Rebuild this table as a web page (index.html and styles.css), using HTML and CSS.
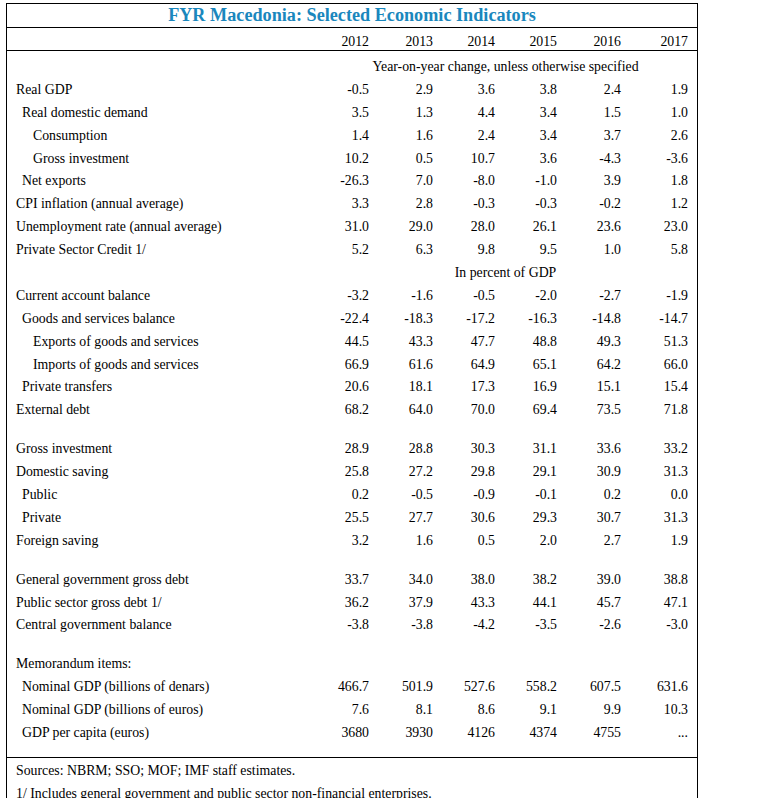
FILE: index.html
```html
<!DOCTYPE html>
<html lang="en">
<head>
<meta charset="utf-8">
<title>FYR Macedonia: Selected Economic Indicators</title>
<link rel="stylesheet" href="styles.css">
</head>
<body>
<div class="sheet">
  <div class="title">FYR Macedonia: Selected Economic Indicators</div>
  <div class="row years"><span></span><span>2012</span><span>2013</span><span>2014</span><span>2015</span><span>2016</span><span>2017</span></div>
  <div class="body">
    <div class="row sub"><span></span><span class="span">Year-on-year change, unless otherwise specified</span></div>
    <div class="row"><span class="l0">Real GDP</span><span>-0.5</span><span>2.9</span><span>3.6</span><span>3.8</span><span>2.4</span><span>1.9</span></div>
    <div class="row"><span class="l1">Real domestic demand</span><span>3.5</span><span>1.3</span><span>4.4</span><span>3.4</span><span>1.5</span><span>1.0</span></div>
    <div class="row"><span class="l2">Consumption</span><span>1.4</span><span>1.6</span><span>2.4</span><span>3.4</span><span>3.7</span><span>2.6</span></div>
    <div class="row"><span class="l2">Gross investment</span><span>10.2</span><span>0.5</span><span>10.7</span><span>3.6</span><span>-4.3</span><span>-3.6</span></div>
    <div class="row"><span class="l1">Net exports</span><span>-26.3</span><span>7.0</span><span>-8.0</span><span>-1.0</span><span>3.9</span><span>1.8</span></div>
    <div class="row"><span class="l0">CPI inflation (annual average)</span><span>3.3</span><span>2.8</span><span>-0.3</span><span>-0.3</span><span>-0.2</span><span>1.2</span></div>
    <div class="row"><span class="l0">Unemployment rate (annual average)</span><span>31.0</span><span>29.0</span><span>28.0</span><span>26.1</span><span>23.6</span><span>23.0</span></div>
    <div class="row"><span class="l0">Private Sector Credit 1/</span><span>5.2</span><span>6.3</span><span>9.8</span><span>9.5</span><span>1.0</span><span>5.8</span></div>
    <div class="row sub"><span></span><span class="span">In percent of GDP</span></div>
    <div class="row"><span class="l0">Current account balance</span><span>-3.2</span><span>-1.6</span><span>-0.5</span><span>-2.0</span><span>-2.7</span><span>-1.9</span></div>
    <div class="row"><span class="l1">Goods and services balance</span><span>-22.4</span><span>-18.3</span><span>-17.2</span><span>-16.3</span><span>-14.8</span><span>-14.7</span></div>
    <div class="row"><span class="l2">Exports of goods and services</span><span>44.5</span><span>43.3</span><span>47.7</span><span>48.8</span><span>49.3</span><span>51.3</span></div>
    <div class="row"><span class="l2">Imports of goods and services</span><span>66.9</span><span>61.6</span><span>64.9</span><span>65.1</span><span>64.2</span><span>66.0</span></div>
    <div class="row"><span class="l1">Private transfers</span><span>20.6</span><span>18.1</span><span>17.3</span><span>16.9</span><span>15.1</span><span>15.4</span></div>
    <div class="row"><span class="l0">External debt</span><span>68.2</span><span>64.0</span><span>70.0</span><span>69.4</span><span>73.5</span><span>71.8</span></div>
    <div class="gap"></div>
    <div class="row"><span class="l0">Gross investment</span><span>28.9</span><span>28.8</span><span>30.3</span><span>31.1</span><span>33.6</span><span>33.2</span></div>
    <div class="row"><span class="l0">Domestic saving</span><span>25.8</span><span>27.2</span><span>29.8</span><span>29.1</span><span>30.9</span><span>31.3</span></div>
    <div class="row"><span class="l1">Public</span><span>0.2</span><span>-0.5</span><span>-0.9</span><span>-0.1</span><span>0.2</span><span>0.0</span></div>
    <div class="row"><span class="l1">Private</span><span>25.5</span><span>27.7</span><span>30.6</span><span>29.3</span><span>30.7</span><span>31.3</span></div>
    <div class="row"><span class="l0">Foreign saving</span><span>3.2</span><span>1.6</span><span>0.5</span><span>2.0</span><span>2.7</span><span>1.9</span></div>
    <div class="gap"></div>
    <div class="row"><span class="l0">General government gross debt</span><span>33.7</span><span>34.0</span><span>38.0</span><span>38.2</span><span>39.0</span><span>38.8</span></div>
    <div class="row"><span class="l0">Public sector gross debt 1/</span><span>36.2</span><span>37.9</span><span>43.3</span><span>44.1</span><span>45.7</span><span>47.1</span></div>
    <div class="row"><span class="l0">Central government balance</span><span>-3.8</span><span>-3.8</span><span>-4.2</span><span>-3.5</span><span>-2.6</span><span>-3.0</span></div>
    <div class="gap"></div>
    <div class="row"><span class="l0">Memorandum items:</span></div>
    <div class="row"><span class="l1">Nominal GDP (billions of denars)</span><span>466.7</span><span>501.9</span><span>527.6</span><span>558.2</span><span>607.5</span><span>631.6</span></div>
    <div class="row"><span class="l1">Nominal GDP (billions of euros)</span><span>7.6</span><span>8.1</span><span>8.6</span><span>9.1</span><span>9.9</span><span>10.3</span></div>
    <div class="row"><span class="l1">GDP per capita (euros)</span><span>3680</span><span>3930</span><span>4126</span><span>4374</span><span>4755</span><span>...</span></div>
    <div class="gap-end"></div>
  </div>
  <div class="notes">
    <div class="note">Sources: NBRM; SSO; MOF; IMF staff estimates.</div>
    <div class="note">1/ Includes general government and public sector non-financial enterprises.</div>
  </div>
</div>
</body>
</html>
```

FILE: styles.css
```css
html, body {
  margin: 0;
  padding: 0;
  background: #fff;
}

body {
  font-family: "Liberation Serif", "Times New Roman", serif;
  font-size: 13.8px;
  color: #000;
  overflow: hidden;
}

.sheet {
  margin: 3px 0 0 6px;
  width: 690px;
  min-height: 820px;
  border: 1px solid #000;
  border-bottom: none;
}

.title {
  height: 23px;
  line-height: 23px;
  border-bottom: 1px solid #000;
  text-align: center;
  font-weight: bold;
  font-size: 18.2px;
  color: #1a87bd;
}

.row {
  display: grid;
  grid-template-columns: 307px 64px 64px 62px 62px 64px 67px;
  height: 22.9px;
  line-height: 22.9px;
  white-space: nowrap;
}

.row > span {
  text-align: right;
  padding-right: 9px;
}

.row > span.l0,
.row > span.l1,
.row > span.l2 {
  text-align: left;
  padding-right: 0;
}

.l0 { padding-left: 9px; }
.l1 { padding-left: 15px; }
.l2 { padding-left: 26px; }

.years {
  box-sizing: border-box;
  height: 23px;
  padding-top: 5px;
  line-height: 18px;
  border-bottom: 1px solid #000;
}

.body {
  padding-top: 5px;
}

.sub > span.span {
  grid-column: 2 / 8;
  text-align: center;
  padding-right: 0;
}

.gap {
  height: 16px;
}

.gap-end {
  height: 12px;
}

.notes {
  border-top: 1px solid #000;
  padding-top: 2.5px;
}

.note {
  padding-left: 9px;
  height: 22.9px;
  line-height: 22.9px;
  white-space: nowrap;
}
```
